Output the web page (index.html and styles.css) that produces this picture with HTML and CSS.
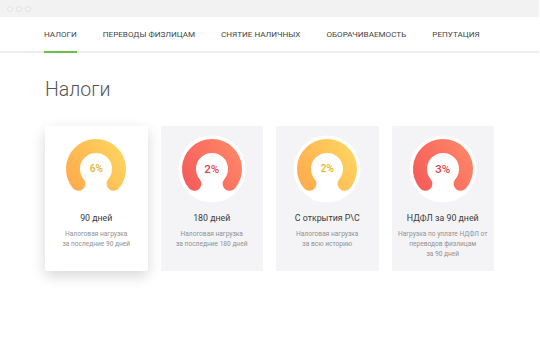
FILE: index.html
```html
<!DOCTYPE html>
<html lang="ru">
<head>
<meta charset="utf-8">
<link rel="stylesheet" href="styles.css">
</head>
<body>
<div class="window">
  <div class="titlebar">
    <span class="dot"></span><span class="dot"></span><span class="dot"></span>
  </div>
  <nav class="tabs">
    <a class="tab active">Налоги</a>
    <a class="tab">Переводы физлицам</a>
    <a class="tab">Снятие наличных</a>
    <a class="tab">Оборачиваемость</a>
    <a class="tab">Репутация</a>
  </nav>
  <main class="main">
    <h1 class="title">Налоги</h1>
    <div class="cards">
      <div class="card card-active">
        <div class="gauge">
          <svg viewBox="0 0 68 68" width="68" height="68">
            <defs>
              <linearGradient id="gy1" x1="8" y1="52" x2="60" y2="20" gradientUnits="userSpaceOnUse">
                <stop offset="0" stop-color="#ffab4c"/>
                <stop offset="1" stop-color="#ffd25f"/>
              </linearGradient>
            </defs>
            <circle cx="34" cy="34" r="33.5" fill="#fff"/>
            <path d="M16.38 48.78 A23 23 0 1 1 51.62 48.78" fill="none" stroke="url(#gy1)" stroke-width="14" stroke-linecap="round"/>
          </svg>
          <span class="val val-y small">6%</span>
        </div>
        <div class="card-title">90 дней</div>
        <div class="card-desc">Налоговая нагрузка<br>за последние 90 дней</div>
      </div>
      <div class="card">
        <div class="gauge">
          <svg viewBox="0 0 68 68" width="68" height="68">
            <defs>
              <linearGradient id="gr1" x1="8" y1="52" x2="60" y2="20" gradientUnits="userSpaceOnUse">
                <stop offset="0" stop-color="#f55b5b"/>
                <stop offset="1" stop-color="#ff8466"/>
              </linearGradient>
            </defs>
            <circle cx="34" cy="34" r="33.5" fill="#fff"/>
            <path d="M16.38 48.78 A23 23 0 1 1 51.62 48.78" fill="none" stroke="url(#gr1)" stroke-width="14" stroke-linecap="round"/>
          </svg>
          <span class="val val-r">2%</span>
        </div>
        <div class="card-title">180 дней</div>
        <div class="card-desc">Налоговая нагрузка<br>за последние 180 дней</div>
      </div>
      <div class="card">
        <div class="gauge">
          <svg viewBox="0 0 68 68" width="68" height="68">
            <defs>
              <linearGradient id="gy2" x1="8" y1="52" x2="60" y2="20" gradientUnits="userSpaceOnUse">
                <stop offset="0" stop-color="#ffab4c"/>
                <stop offset="1" stop-color="#ffd25f"/>
              </linearGradient>
            </defs>
            <circle cx="34" cy="34" r="33.5" fill="#fff"/>
            <path d="M16.38 48.78 A23 23 0 1 1 51.62 48.78" fill="none" stroke="url(#gy2)" stroke-width="14" stroke-linecap="round"/>
          </svg>
          <span class="val val-y small">2%</span>
        </div>
        <div class="card-title">С открытия Р\С</div>
        <div class="card-desc">Налоговая нагрузка<br>за всю историю</div>
      </div>
      <div class="card">
        <div class="gauge">
          <svg viewBox="0 0 68 68" width="68" height="68">
            <defs>
              <linearGradient id="gr2" x1="8" y1="52" x2="60" y2="20" gradientUnits="userSpaceOnUse">
                <stop offset="0" stop-color="#f55b5b"/>
                <stop offset="1" stop-color="#ff8466"/>
              </linearGradient>
            </defs>
            <circle cx="34" cy="34" r="33.5" fill="#fff"/>
            <path d="M16.38 48.78 A23 23 0 1 1 51.62 48.78" fill="none" stroke="url(#gr2)" stroke-width="14" stroke-linecap="round"/>
          </svg>
          <span class="val val-r">3%</span>
        </div>
        <div class="card-title">НДФЛ за 90 дней</div>
        <div class="card-desc">Нагрузка по уплате НДФЛ от<br>переводов физлицам<br>за 90 дней</div>
      </div>
    </div>
  </main>
</div>
</body>
</html>
```
FILE: styles.css
```css
* { box-sizing: border-box; }
html, body { margin: 0; padding: 0; background: #fff; }
body {
  font-family: Roboto, "Liberation Sans", Arial, sans-serif;
  color: #333;
  width: 540px;
  height: 337px;
  overflow: hidden;
}
.window {
  width: 539px;
  height: 337px;
}
.titlebar {
  height: 17px;
  background: #f2f2f2;
  display: flex;
  align-items: center;
  gap: 3px;
  padding-left: 7px;
  border-top-right-radius: 2px;
}
.dot {
  width: 6px;
  height: 6px;
  border-radius: 50%;
  border: 1px solid #e2e2e2;
  background: #f5f5f5;
}
.tabs {
  height: 36px;
  display: flex;
  gap: 26px;
  padding-left: 44px;
  border-bottom: 2px solid #ececec;
}
.tab {
  display: flex;
  align-items: center;
  font-size: 8.1px;
  text-transform: uppercase;
  color: #444;
  margin-bottom: -2px;
  border-bottom: 2px solid transparent;
}
.tab.active { border-bottom-color: #6abf4b; }
.main { padding: 0 45px; }
.title {
  margin: 26px 0 0;
  height: 47px;
  font-size: 19.5px;
  line-height: 22px;
  font-weight: 300;
  color: #555;
}
.cards {
  display: flex;
  gap: 13px;
}
.card {
  width: 103px;
  height: 145px;
  background: #f4f4f6;
  border-radius: 2px;
  padding-top: 9px;
  display: flex;
  flex-direction: column;
  align-items: center;
  text-align: center;
}
.card-active {
  background: #fff;
  box-shadow: 0 5px 14px rgba(0, 0, 0, 0.16);
}
.gauge {
  position: relative;
  width: 68px;
  height: 68px;
}
.gauge svg { display: block; }
.val {
  position: absolute;
  left: 0;
  right: 0;
  top: 27px;
  text-align: center;
  font-weight: 500;
  font-size: 11.5px;
  line-height: 14px;
}
.val.small { font-size: 10px; }
.val-y { color: #e6b321; }
.val-r { color: #d9454a; }
.card-title {
  margin-top: 9px;
  font-size: 8.8px;
  line-height: 12px;
  color: #3a3a3a;
}
.card-desc {
  margin-top: 5px;
  font-size: 6.6px;
  line-height: 10px;
  color: #929292;
}
```
